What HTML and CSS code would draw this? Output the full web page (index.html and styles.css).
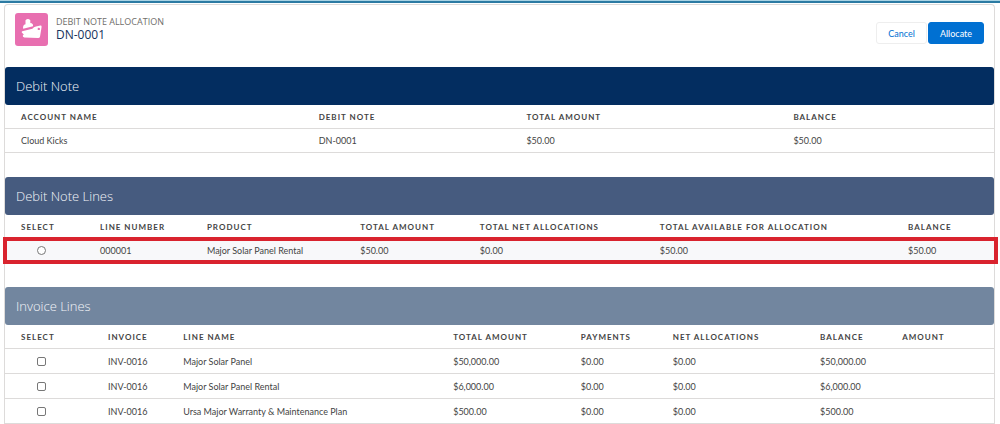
FILE: index.html
```html
<!DOCTYPE html>
<html lang="en">

<head>
    <meta charset="UTF-8">
    <meta name="viewport" content="width=device-width, initial-scale=1.0">
    <title>Debit Note Allocation - DN-0001</title>
    <link rel="stylesheet" href="styles.css">
</head>

<body>
    <div class="top-bar"></div>

    <main class="card">
        <header class="page-header">
            <div class="record-icon">
                <svg viewBox="0 0 33 33" aria-hidden="true">
                    <path d="M10.5 7.2 Q13 5 15.3 7.2 L15.3 10 Q18.4 10.2 18 13.2 L8.2 15.8 Q7.4 12 10.5 11.2 Z"/>
                    <path fill-rule="evenodd" d="M7.2 18.3 L17.4 15.8 Q18.7 14.1 21 13.6 L25.4 12.6 Q26.8 12.5 26.6 14 L25 23.8 Q24.6 25.1 23 25 L9.3 24.4 Q7.4 23.9 7.8 22.4 L8.8 21.4 L7 19.8 Q6.1 18.8 7.2 18.3 Z M23.8 14.7 A1.2 1.2 0 1 0 23.8 17.1 A1.2 1.2 0 1 0 23.8 14.7 Z"/>
                </svg>
            </div>
            <div class="record-title">
                <p>DEBIT NOTE ALLOCATION</p>
                <h1>DN-0001</h1>
            </div>
            <div class="actions">
                <button type="button" class="btn">Cancel</button>
                <button type="button" class="btn btn-brand">Allocate</button>
            </div>
        </header>

        <section>
            <h2 class="section-title">Debit Note</h2>
            <table>
                <colgroup>
                    <col style="width: 30.1%">
                    <col style="width: 21%">
                    <col style="width: 27%">
                    <col>
                </colgroup>
                <thead>
                    <tr>
                        <th>ACCOUNT NAME</th>
                        <th>DEBIT NOTE</th>
                        <th>TOTAL AMOUNT</th>
                        <th>BALANCE</th>
                    </tr>
                </thead>
                <tbody>
                    <tr>
                        <td>Cloud Kicks</td>
                        <td>DN-0001</td>
                        <td>$50.00</td>
                        <td>$50.00</td>
                    </tr>
                </tbody>
            </table>
        </section>

        <section>
            <h2 class="section-title lines">Debit Note Lines</h2>
            <table>
                <colgroup>
                    <col style="width: 8%">
                    <col style="width: 10.8%">
                    <col style="width: 15.5%">
                    <col style="width: 12.1%">
                    <col style="width: 18.2%">
                    <col style="width: 25.1%">
                    <col>
                </colgroup>
                <thead>
                    <tr>
                        <th>SELECT</th>
                        <th>LINE NUMBER</th>
                        <th>PRODUCT</th>
                        <th>TOTAL AMOUNT</th>
                        <th>TOTAL NET ALLOCATIONS</th>
                        <th>TOTAL AVAILABLE FOR ALLOCATION</th>
                        <th>BALANCE</th>
                    </tr>
                </thead>
                <tbody>
                    <tr class="highlight">
                        <td class="select"><input type="radio" name="debitLine" aria-labelledby="line1"></td>
                        <td id="line1">000001</td>
                        <td>Major Solar Panel Rental</td>
                        <td>$50.00</td>
                        <td>$0.00</td>
                        <td>$50.00</td>
                        <td>$50.00</td>
                    </tr>
                </tbody>
            </table>
        </section>

        <section>
            <h2 class="section-title invoices">Invoice Lines</h2>
            <table class="invoice-table">
                <colgroup>
                    <col style="width: 8.8%">
                    <col style="width: 7.6%">
                    <col style="width: 27.3%">
                    <col style="width: 12.9%">
                    <col style="width: 9.3%">
                    <col style="width: 14.9%">
                    <col style="width: 8.3%">
                    <col>
                </colgroup>
                <thead>
                    <tr>
                        <th>SELECT</th>
                        <th>INVOICE</th>
                        <th>LINE NAME</th>
                        <th>TOTAL AMOUNT</th>
                        <th>PAYMENTS</th>
                        <th>NET ALLOCATIONS</th>
                        <th>BALANCE</th>
                        <th>AMOUNT</th>
                    </tr>
                </thead>
                <tbody>
                    <tr>
                        <td class="select"><input type="checkbox" aria-labelledby="invoice1"></td>
                        <td>INV-0016</td>
                        <td id="invoice1">Major Solar Panel</td>
                        <td>$50,000.00</td>
                        <td>$0.00</td>
                        <td>$0.00</td>
                        <td>$50,000.00</td>
                        <td></td>
                    </tr>
                    <tr>
                        <td class="select"><input type="checkbox" aria-labelledby="invoice2"></td>
                        <td>INV-0016</td>
                        <td id="invoice2">Major Solar Panel Rental</td>
                        <td>$6,000.00</td>
                        <td>$0.00</td>
                        <td>$0.00</td>
                        <td>$6,000.00</td>
                        <td></td>
                    </tr>
                    <tr>
                        <td class="select"><input type="checkbox" aria-labelledby="invoice3"></td>
                        <td>INV-0016</td>
                        <td id="invoice3">Ursa Major Warranty &amp; Maintenance Plan</td>
                        <td>$500.00</td>
                        <td>$0.00</td>
                        <td>$0.00</td>
                        <td>$500.00</td>
                        <td></td>
                    </tr>
                </tbody>
            </table>
        </section>
    </main>
</body>

</html>
```
FILE: styles.css
```css
* {
    margin: 0;
    padding: 0;
    box-sizing: border-box;
}

body {
    background: white;
    color: #444;
    font-family: "Open Sans", "Noto Sans", sans-serif;
    font-size: 9px;
}

.top-bar {
    height: 3px;
    background: #a9d3e4;
    border-bottom: 2px solid #2c7ba3;
}

.card {
    margin: 1px 5px 0 4px;
    border: 1px solid #dddbda;
    border-bottom: none;
    border-radius: 4px 4px 0 0;
}

.page-header {
    display: flex;
    align-items: flex-start;
    height: 62px;
    padding: 8px 10px;
}

.record-icon {
    width: 33px;
    height: 33px;
    border-radius: 3px;
    background: #e86fb0;
}

.record-icon svg {
    display: block;
    fill: white;
}

.record-title {
    margin: 3px 0 0 8px;
}

.record-title p {
    color: #706e6b;
    font-size: 9px;
    line-height: 12px;
}

.record-title h1 {
    color: #16325c;
    font-size: 12px;
    font-weight: 400;
    line-height: 14px;
}

.actions {
    display: flex;
    gap: 1px;
    margin: 9px 0 0 auto;
}

.btn {
    height: 22px;
    padding: 0 11px;
    border: 1px solid #eeeeee;
    border-radius: 3px;
    background: white;
    color: #0070d2;
    font-family: Lato, "Open Sans", sans-serif;
    font-size: 9px;
    cursor: pointer;
}

.btn-brand {
    border-color: #0070d2;
    background: #0070d2;
    color: white;
}

.section-title {
    height: 38px;
    padding: 0 11px;
    border-radius: 3px;
    background: #032d60;
    color: #f3f5f9;
    font-size: 13px;
    font-weight: 300;
    line-height: 38px;
}

.section-title.lines {
    background: #465b7f;
}

.section-title.invoices {
    background: #72869f;
}

table {
    width: 100%;
    margin-bottom: 24px;
    border-collapse: separate;
    border-spacing: 0;
    table-layout: fixed;
    font-family: Lato, "Open Sans", sans-serif;
}

th,
td {
    height: 24px;
    padding: 0 0 0 16px;
    border-bottom: 1px solid #dddbda;
    text-align: left;
    white-space: nowrap;
}

th {
    padding-top: 1px;
    font-size: 8px;
    font-weight: 700;
    letter-spacing: 1px;
}

.invoice-table {
    margin-bottom: 0;
}

.invoice-table td {
    height: 25px;
}

.select input {
    display: block;
    appearance: none;
    width: 9px;
    height: 9px;
    margin-left: 16px;
    border: 1px solid #777;
    border-radius: 2px;
    background: white;
}

.select input[type="radio"] {
    border-radius: 50%;
}

.highlight {
    position: relative;
    background: #f8f8fa;
}

.highlight::after {
    content: "";
    position: absolute;
    inset: -2px -4px -1px -2px;
    border: 4px solid #d9232e;
    pointer-events: none;
}
```
